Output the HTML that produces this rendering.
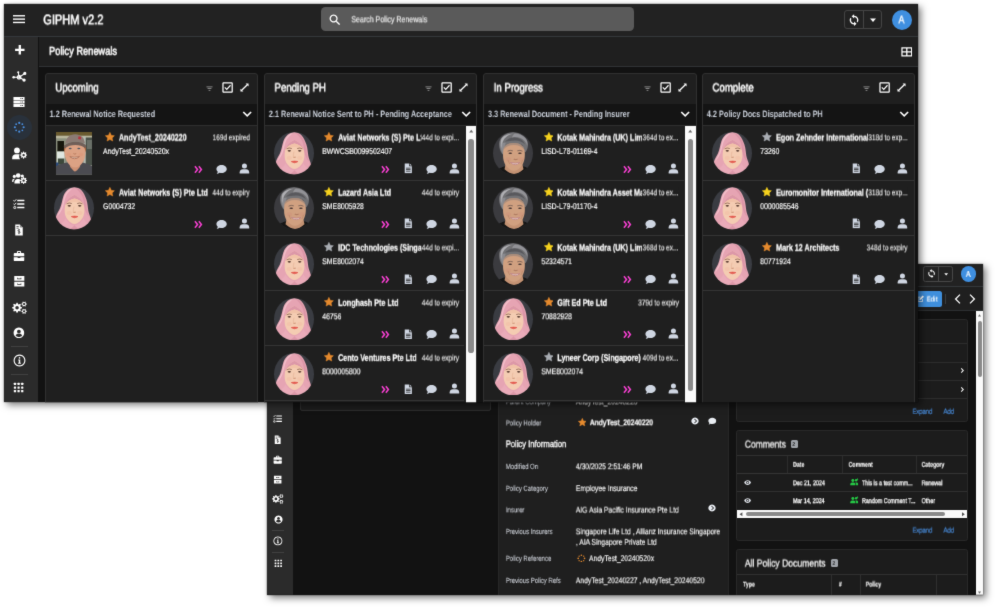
<!DOCTYPE html>
<html lang="en"><head><meta charset="utf-8"><title>GIPHM v2.2 - Policy Renewals</title>
<style>
html,body{margin:0;padding:0;background:#fff;overflow:hidden;}
html{width:995px;height:607px;}
body{width:995px;height:607px;position:relative;overflow:hidden;font-family:"Liberation Sans",Arial,sans-serif;}
#root{position:relative;width:995px;height:607px;overflow:hidden;}
.b{position:absolute;box-sizing:border-box;}
.t{position:absolute;white-space:nowrap;display:inline-block;will-change:transform;text-rendering:geometricPrecision;}
#blur{position:absolute;left:-6px;top:-6px;width:1007px;height:619px;background:#fff;filter:url(#pgsoft);}
</style></head><body>
<svg width="0" height="0" style="position:absolute"><defs><symbol id="i-plus" viewBox="0 0 16 16"><path d="M6.4 1.5h3.2v4.9h4.9v3.2h-4.9v4.9h-3.2v-4.9h-4.9v-3.2h4.9z"/></symbol><symbol id="i-network" viewBox="0 0 16 16"><path d="M1.800 9.100 L7.800 9.100 L14.200 4.900 M7.800 9.100 L13.300 12.200 M7.800 9.100 L6.900 3.600" stroke-width="1.200" fill="none" stroke="currentColor"/><circle cx="1.800" cy="9.100" r="1.400"/><path fill-rule="evenodd" d="M7.800 6.500a2.600 2.600 0 1 0 0.001 0z M7.800 8.050a1.050 1.050 0 1 1 -0.001 0z"/><circle cx="14.200" cy="4.900" r="1.850"/><circle cx="13.300" cy="12.200" r="1.850"/><circle cx="6.900" cy="3.500" r="1.150"/></symbol><symbol id="i-server" viewBox="0 0 16 16"><path fill-rule="evenodd" d="M0.600 1.400h14.800v3.900h-14.800z M12 2.800v1.100h1.100v-1.100z M10 2.800v1.100h1.100v-1.100z M0.600 6.050h14.800v3.900h-14.800z M12 7.450v1.100h1.100v-1.100z M10 7.450v1.100h1.100v-1.100z M0.600 10.700h14.800v3.900h-14.800z M12 12.100v1.100h1.100v-1.100z M10 12.100v1.100h1.100v-1.100z"/></symbol><symbol id="i-dots" viewBox="0 0 16 16"><circle cx="13.60" cy="8.00" r="1.4"/><circle cx="11.96" cy="11.96" r="1.15"/><circle cx="8.00" cy="13.60" r="1.4"/><circle cx="4.04" cy="11.96" r="1.15"/><circle cx="2.40" cy="8.00" r="1.4"/><circle cx="4.04" cy="4.04" r="1.15"/><circle cx="8.00" cy="2.40" r="1.4"/><circle cx="11.96" cy="4.04" r="1.15"/></symbol><symbol id="i-user" viewBox="0 0 16 16"><circle cx="8" cy="4.500" r="3.700"/><path d="M1 15.300v-1.800c0-2.700 2.100-4.500 4.600-4.500h4.800c2.500 0 4.600 1.800 4.600 4.500v1.800z"/></symbol><symbol id="i-usercog" viewBox="0 0 16 16"><circle cx="5.300" cy="4.700" r="3.100"/><path d="M0.200 14v-1.300c0-2.300 1.700-3.800 3.800-3.800h2.700c0.500 0 1 0.100 1.400 0.200c-0.600 1-0.700 2.200-0.300 3.300c0.200 0.600 0.500 1.100 0.900 1.600z"/><path fill-rule="evenodd" d="M16.18 9.33 L16.18 10.07 L14.98 10.48 L14.78 10.97 L15.34 12.11 L14.81 12.64 L13.67 12.08 L13.18 12.28 L12.77 13.48 L12.03 13.48 L11.62 12.28 L11.13 12.08 L9.99 12.64 L9.46 12.11 L10.02 10.97 L9.82 10.48 L8.62 10.07 L8.62 9.33 L9.82 8.92 L10.02 8.43 L9.46 7.29 L9.99 6.76 L11.13 7.32 L11.62 7.12 L12.03 5.92 L12.77 5.92 L13.18 7.12 L13.67 7.32 L14.81 6.76 L15.34 7.29 L14.78 8.43 L14.98 8.92Z M11.15 9.70 a1.25 1.25 0 1 0 2.5 0 a1.25 1.25 0 1 0 -2.5 0Z"/></symbol><symbol id="i-userscog" viewBox="0 0 16 16"><circle cx="6.600" cy="4.800" r="2.500"/><circle cx="2.500" cy="5.800" r="1.700"/><circle cx="11" cy="5.300" r="1.700"/><path d="M2.600 13.400v-1.400c0-2.100 1.600-3.500 3.400-3.500h1.300c0.600 0 1.200 0.200 1.700 0.500c-0.700 1-0.900 2.300-0.500 3.500c0.100 0.300 0.200 0.600 0.400 0.900z"/><path d="M0.200 11.800v-1.500c0-1.200 0.900-2 2-2h1c-1.100 0.800-1.700 2-1.700 3.500z"/><path fill-rule="evenodd" d="M16.18 9.83 L16.18 10.57 L14.98 10.98 L14.78 11.47 L15.34 12.61 L14.81 13.14 L13.67 12.58 L13.18 12.78 L12.77 13.98 L12.03 13.98 L11.62 12.78 L11.13 12.58 L9.99 13.14 L9.46 12.61 L10.02 11.47 L9.82 10.98 L8.62 10.57 L8.62 9.83 L9.82 9.42 L10.02 8.93 L9.46 7.79 L9.99 7.26 L11.13 7.82 L11.62 7.62 L12.03 6.42 L12.77 6.42 L13.18 7.62 L13.67 7.82 L14.81 7.26 L15.34 7.79 L14.78 8.93 L14.98 9.42Z M11.15 10.20 a1.25 1.25 0 1 0 2.5 0 a1.25 1.25 0 1 0 -2.5 0Z"/></symbol><symbol id="i-tasks" viewBox="0 0 16 16"><rect x="5.6" y="2.4" width="9.6" height="1.9" rx="0.4"/><rect x="5.6" y="7.05" width="9.6" height="1.9" rx="0.4"/><rect x="5.6" y="11.7" width="9.6" height="1.9" rx="0.4"/><path d="M0.700 3.200l1.200 1.200l2.400-2.600" fill="none" stroke-width="1.3" stroke="currentColor"/><path d="M0.700 7.900l1.200 1.200l2.400-2.600" fill="none" stroke-width="1.300" stroke="currentColor"/><rect x="1.1" y="11.400" width="2.600" height="2.600" rx="0.500" fill="none" stroke-width="1.100" stroke="currentColor"/></symbol><symbol id="i-invoice" viewBox="0 0 16 16"><path d="M3 0.800h6.200l3.800 3.800v10.600h-10z"/><path d="M9.2 0.800v3.800h3.800" fill="#2b2b2b" opacity="0.55"/><rect x="4.600" y="3" width="3" height="1" fill="#2b2b2b"/><rect x="4.600" y="5" width="3" height="1" fill="#2b2b2b"/><path d="M9.400 8.300c-0.300-0.500-0.800-0.700-1.400-0.700c-0.800 0-1.400 0.400-1.400 1.100c0 1.600 2.900 0.700 2.900 2.300c0 0.700-0.600 1.100-1.500 1.100c-0.700 0-1.300-0.300-1.600-0.800M8 6.800v6.800" fill="none" stroke="#2b2b2b" stroke-width="0.9"/></symbol><symbol id="i-briefcase" viewBox="0 0 16 16"><path fill-rule="evenodd" d="M5.200 4v-1.500c0-0.700 0.500-1.200 1.200-1.200h3.200c0.700 0 1.200 0.500 1.200 1.200v1.500h3c0.700 0 1.200 0.500 1.200 1.200v3.100h-14v-3.100c0-0.700 0.500-1.200 1.200-1.200z M6.600 4h2.800v-1.300h-2.800z"/><path d="M1 9.500h5.200v1h3.600v-1h5.200v4c0 0.700-0.500 1.200-1.200 1.200h-11.600c-0.700 0-1.200-0.500-1.200-1.200z"/></symbol><symbol id="i-cabinet" viewBox="0 0 16 16"><path fill-rule="evenodd" d="M1.600 1.400h12.800v5.900h-12.800z M5.400 3.600v1.700h5.200v-1.700h-1v0.700h-3.200v-0.700z"/><path fill-rule="evenodd" d="M1.600 8.500h12.800v6.100h-12.800z M5.400 10.800v1.700h5.200v-1.700h-1v0.700h-3.200v-0.700z"/></symbol><symbol id="i-cogs" viewBox="0 0 16 16"><path fill-rule="evenodd" d="M10.67 7.68 L10.67 8.72 L9.13 9.33 L8.84 10.04 L9.50 11.56 L8.76 12.30 L7.24 11.64 L6.53 11.93 L5.92 13.47 L4.88 13.47 L4.27 11.93 L3.56 11.64 L2.04 12.30 L1.30 11.56 L1.96 10.04 L1.67 9.33 L0.13 8.72 L0.13 7.68 L1.67 7.07 L1.96 6.36 L1.30 4.84 L2.04 4.10 L3.56 4.76 L4.27 4.47 L4.88 2.93 L5.92 2.93 L6.53 4.47 L7.24 4.76 L8.76 4.10 L9.50 4.84 L8.84 6.36 L9.13 7.07Z M3.50 8.20 a1.9 1.9 0 1 0 3.8 0 a1.9 1.9 0 1 0 -3.8 0Z"/><path fill-rule="evenodd" d="M15.78 3.92 L15.78 4.68 L14.75 5.07 L14.49 5.52 L14.67 6.60 L14.01 6.98 L13.16 6.28 L12.64 6.28 L11.79 6.98 L11.13 6.60 L11.31 5.52 L11.05 5.07 L10.02 4.68 L10.02 3.92 L11.05 3.53 L11.31 3.08 L11.13 2.00 L11.79 1.62 L12.64 2.32 L13.16 2.32 L14.01 1.62 L14.67 2.00 L14.49 3.08 L14.75 3.53Z M11.70 4.30 a1.2 1.2 0 1 0 2.4 0 a1.2 1.2 0 1 0 -2.4 0Z"/><path fill-rule="evenodd" d="M15.78 11.72 L15.78 12.48 L14.75 12.87 L14.49 13.32 L14.67 14.40 L14.01 14.78 L13.16 14.08 L12.64 14.08 L11.79 14.78 L11.13 14.40 L11.31 13.32 L11.05 12.87 L10.02 12.48 L10.02 11.72 L11.05 11.33 L11.31 10.88 L11.13 9.80 L11.79 9.42 L12.64 10.12 L13.16 10.12 L14.01 9.42 L14.67 9.80 L14.49 10.88 L14.75 11.33Z M11.70 12.10 a1.2 1.2 0 1 0 2.4 0 a1.2 1.2 0 1 0 -2.4 0Z"/></symbol><symbol id="i-usercircle" viewBox="0 0 16 16"><path fill-rule="evenodd" d="M8 0.800a7.200 7.200 0 1 0 0.001 0z M8 3.600a2.500 2.500 0 1 1 -0.001 0z M3.600 11.400c0.600-1.500 1.900-2.300 3.300-2.300h2.200c1.400 0 2.700 0.800 3.300 2.300c-1.100 1.300-2.700 2-4.400 2s-3.300-0.700-4.400-2z"/></symbol><symbol id="i-info" viewBox="0 0 16 16"><path fill-rule="evenodd" d="M8 0.700a7.300 7.300 0 1 0 0.001 0z M8 2.100a5.900 5.900 0 1 1 -0.001 0z"/><circle cx="8" cy="4.800" r="1"/><path d="M6.500 6.800h2.400v4h0.800v1.200h-3.400v-1.200h0.800v-2.800h-0.600z"/></symbol><symbol id="i-grid" viewBox="0 0 16 16"><rect x="1.2" y="1.2" width="3.200" height="3.200" rx="0.600"/><rect x="6.4" y="1.2" width="3.200" height="3.200" rx="0.600"/><rect x="11.6" y="1.2" width="3.200" height="3.200" rx="0.600"/><rect x="1.2" y="6.4" width="3.200" height="3.200" rx="0.600"/><rect x="6.4" y="6.4" width="3.200" height="3.200" rx="0.600"/><rect x="11.6" y="6.4" width="3.200" height="3.200" rx="0.600"/><rect x="1.2" y="11.6" width="3.200" height="3.200" rx="0.600"/><rect x="6.4" y="11.6" width="3.200" height="3.200" rx="0.600"/><rect x="11.6" y="11.6" width="3.200" height="3.200" rx="0.600"/></symbol><symbol id="i-menu" viewBox="0 0 16 16"><rect x="0" y="2.700" width="16" height="1.800"/><rect x="0" y="7" width="16" height="1.800"/><rect x="0" y="11.300" width="16" height="1.800"/></symbol><symbol id="i-search" viewBox="0 0 16 16"><path fill-rule="evenodd" d="M6.400 0.800a5.600 5.600 0 1 0 0.001 0z M6.400 2.600a3.800 3.800 0 1 1 -0.001 0z"/><path d="M9.400 10.700l1.300-1.300l4.700 4.700l-1.300 1.300z"/></symbol><symbol id="i-sync" viewBox="0 0 16 16"><path d="M8 2.200v-2l-3.200 2.900l3.200 2.900v-2a4 4 0 0 1 3.500 5.900l1.400 1.100a5.800 5.800 0 0 0 -4.900-8.800z"/><path d="M8 13.800v2l3.200-2.900l-3.200-2.900v2a4 4 0 0 1 -3.500-5.900l-1.400-1.100a5.800 5.800 0 0 0 4.900 8.800z"/></symbol><symbol id="i-caret" viewBox="0 0 16 16"><path d="M3.200 5.600h9.600l-4.800 5.400z"/></symbol><symbol id="i-th2" viewBox="0 0 16 16"><path fill-rule="evenodd" d="M0.500 1.600h15v12.800h-15z M2.200 3.300v3.800h4.900v-3.800z M8.900 3.300v3.800h4.900v-3.800z M2.200 8.900v3.800h4.900v-3.800z M8.900 8.900v3.800h4.900v-3.800z"/></symbol><symbol id="i-filter" viewBox="0 0 16 16"><rect x="1" y="3.500" width="14" height="1.700"/><rect x="3.600" y="7.400" width="8.800" height="1.700"/><rect x="6" y="11.300" width="4" height="1.700"/></symbol><symbol id="i-check" viewBox="0 0 16 16"><path fill-rule="evenodd" d="M2.300 0.500h11.400c1 0 1.800 0.800 1.800 1.800v11.400c0 1-0.800 1.800-1.800 1.800h-11.400c-1 0-1.800-0.800-1.800-1.800v-11.400c0-1 0.800-1.800 1.800-1.800z M2.300 2.300v11.400h11.400v-11.400z"/><path d="M3.400 8.300l1.200-1.200l2.200 2.200l4.800-5.200l1.200 1.100l-6 6.500z"/></symbol><symbol id="i-expand" viewBox="0 0 16 16"><path d="M3 13L13 3" stroke="currentColor" stroke-width="2.300" fill="none"/><path d="M15.200 0.800v5.200l-5.200-5.200z M0.800 15.200v-5.200l5.200 5.200z"/></symbol><symbol id="i-chev" viewBox="0 0 16 16"><path d="M2.200 5.900l1.500-1.500l4.300 4.300l4.300-4.300l1.500 1.500l-5.800 5.800z"/></symbol><symbol id="i-chevr" viewBox="0 0 16 16"><path d="M5.800 2.400l-1.600 1.600l4 4l-4 4l1.600 1.600l5.600-5.600z"/></symbol><symbol id="i-chevl" viewBox="0 0 16 16"><path d="M10.200 2.400l1.600 1.600l-4 4l4 4l-1.600 1.600l-5.600-5.600z"/></symbol><symbol id="i-dchev" viewBox="0 0 16 16"><path d="M0.600 3l2.200-1.800l5.300 6.800l-5.300 6.800l-2.200-1.800l3.900-5z"/><path d="M7.600 3l2.200-1.800l5.300 6.800l-5.300 6.800l-2.200-1.800l3.900-5z"/></symbol><symbol id="i-doc" viewBox="0 0 16 16"><path fill-rule="evenodd" d="M2.600 0.600h6.600v4.200h4.200v10.600h-10.800z M4.600 7.300v1h6.800v-1z M4.600 9.500v1h6.800v-1z M4.600 11.700v1h6.800v-1z"/><path d="M10.200 0.600l3.200 3.200h-3.200z"/></symbol><symbol id="i-comment" viewBox="0 0 16 16"><path d="M8 1.600c4.200 0 7.400 2.500 7.400 5.700s-3.200 5.700-7.400 5.700c-1 0-2-0.200-2.900-0.500c-0.900 0.700-2.400 1.500-4.200 1.500c0.700-0.700 1.500-1.900 1.600-3c-1.100-1-1.900-2.300-1.900-3.700c0-3.200 3.200-5.700 7.400-5.700z"/></symbol><symbol id="i-star" viewBox="0 0 16 16"><path d="M8 0.600l2.300 4.800l5.200 0.700l-3.800 3.600l1 5.200l-4.700-2.600l-4.700 2.600l1-5.200l-3.800-3.600l5.200-0.700z" stroke-linejoin="round" stroke-width="0.8" stroke="currentColor"/></symbol><symbol id="i-arrowc" viewBox="0 0 16 16"><path fill-rule="evenodd" d="M8 0.800a7.200 7.200 0 1 0 0.001 0z M6.400 4.400l1.100-1.100l4.700 4.700l-4.700 4.700l-1.100-1.100l3.600-3.600z"/></symbol><symbol id="i-eye" viewBox="0 0 16 16"><path fill-rule="evenodd" d="M8 2.800c3.400 0 6.200 2 7.600 5.200c-1.400 3.200-4.200 5.200-7.600 5.200s-6.200-2-7.600-5.200c1.400-3.200 4.200-5.200 7.600-5.200z M8 4.600a3.400 3.400 0 1 0 0.001 0z"/><circle cx="8" cy="8" r="1.900"/></symbol><symbol id="i-users" viewBox="0 0 16 16"><circle cx="5.400" cy="4.800" r="2.800"/><circle cx="11.600" cy="4.400" r="2.300"/><path d="M0.400 13.800v-1.400c0-2.100 1.600-3.600 3.500-3.600h3c1.900 0 3.500 1.500 3.500 3.600v1.400z"/><path d="M11.600 13.800v-1.600c0-1.400-0.500-2.500-1.400-3.300c0.300-0.100 0.600-0.100 0.900-0.100h1.400c1.700 0 3.100 1.300 3.100 3.100v1.900z"/><path d="M13.600 0.400h1.200v1.400h1.400v1.200h-1.400v1.400h-1.200v-1.400h-1.400v-1.200h1.400z"/></symbol><symbol id="i-edit" viewBox="0 0 16 16"><path d="M1.400 3.600h6.400l-1.600 1.600h-3.200v8h8v-3.600l1.600-1.600v6.800h-11.200z"/><path d="M12.200 1l2.800 2.800l-6.600 6.600l-3.200 0.500l0.500-3.200z"/></symbol><symbol id="i-navl" viewBox="0 0 16 16"><path d="M10.600 2.200L4.800 8l5.800 5.800" fill="none" stroke="currentColor" stroke-width="1.700"/></symbol><symbol id="i-navr" viewBox="0 0 16 16"><path d="M5.400 2.200L11.200 8l-5.800 5.800" fill="none" stroke="currentColor" stroke-width="1.700"/></symbol><symbol id="i-dots2" viewBox="0 0 16 16"><circle cx="13.80" cy="8.00" r="1.5"/><circle cx="12.10" cy="12.10" r="1.25"/><circle cx="8.00" cy="13.80" r="1.5"/><circle cx="3.90" cy="12.10" r="1.25"/><circle cx="2.20" cy="8.00" r="1.5"/><circle cx="3.90" cy="3.90" r="1.25"/><circle cx="8.00" cy="2.20" r="1.5"/><circle cx="12.10" cy="3.90" r="1.25"/></symbol><symbol id="i-tri" viewBox="0 0 16 16"><path d="M8 4l5 7h-10z"/></symbol></defs></svg><svg width="0" height="0" style="position:absolute"><defs><filter id="soft" x="-5%" y="-5%" width="110%" height="110%"><feGaussianBlur stdDeviation="0.6"/></filter><symbol id="a-hijab" viewBox="0 0 40 42"><clipPath id="cc1"><ellipse cx="20" cy="21" rx="20" ry="21"/></clipPath><g clip-path="url(#cc1)">
<rect width="40" height="42" fill="#3a3c42"/>
<g filter="url(#soft)">
<path d="M20.500 0.200c-5.200 0-9.400 3.600-11.200 9.300c-1.400 4.500-1.800 8.500-3.400 11.800c-1.300 2.700-3.200 5.300-3.900 8c-0.500 2.200-0.200 4.400 0.400 6.300l2 6.400h30l2.600-6.400c0.400-2.400-0.200-4.600-1-6.600c-0.800-2.200-1.700-4.800-2-7.700c-0.400-3.800-0.800-7.700-2.800-11.800c-2-5.700-5.500-9.300-10.700-9.300z" fill="#e6a4b3"/>
<path d="M19 1c-4.400 0.800-7.600 4.200-9 8.800c-1.300 4.400-1.700 8.400-3.300 11.700c-1.300 2.700-3 5-3.700 7.700c2.800-2.400 5.200-6.200 6.400-10.800c1.100-4.400 1.500-8.400 3.500-11.300c1.400-2.100 3.300-3.400 6.100-6.100z" fill="#f3c3cd" opacity="0.850"/>
<path d="M22 1c4 1.200 6.800 4.600 8.300 8.800c1.800 4.600 1.900 8.400 2.500 12.100c0.400 2.800 1.300 5.300 2.200 7.600c-2.600-2.900-4.200-6.600-4.700-10.700c-0.500-4.500-0.900-8.400-2.900-11.300c-1.300-2-2.900-3.700-5.400-6.500z" fill="#d58ea1" opacity="0.700"/>
<path d="M20.500 7.600c-4.600 2.200-8.600 5.800-9.400 10.400c-0.500 2.900-0.600 5.500-0.300 7.800c0.500 3.400 2.200 6.200 4.300 8.200c1.700 1.600 3.500 2.700 5.400 2.700s3.700-1.100 5.400-2.700c2.100-2 3.800-4.800 4.300-8.200c0.300-2.300 0.200-4.900-0.300-7.800c-0.800-4.600-4.800-8.200-9.400-10.400z" fill="#f4ccb2"/>
<path d="M20.500 7.600c-4.600 2.200-8.600 5.800-9.400 10.400c2-3.400 5.200-5.600 9.400-6.500c4.200 0.900 7.400 3.100 9.400 6.500c-0.800-4.600-4.800-8.200-9.400-10.400z" fill="#dc97a8"/>
<path d="M20.500 11.300c-3.800 0.900-6.800 2.700-8.800 5.500c0 0 2.500-1.700 8.800-1.900c6.300 0.200 8.800 1.900 8.800 1.900c-2-2.800-5-4.600-8.800-5.500z" fill="#f1c2a8"/>
<ellipse cx="15.300" cy="25.800" rx="2.600" ry="2" fill="#f0b49e" opacity="0.350"/>
<ellipse cx="25.900" cy="25.800" rx="2.600" ry="2" fill="#f0b49e" opacity="0.350"/>
<ellipse cx="15.300" cy="18.700" rx="1.700" ry="0.800" fill="#54382e"/>
<ellipse cx="25.700" cy="18.700" rx="1.700" ry="0.800" fill="#54382e"/>
<path d="M12.600 16.700q2.600-1.500 5.200-0.300M23.200 16.400q2.600-1.200 5.200 0.300" stroke="#8a6250" stroke-width="0.800" fill="none"/>
<path d="M19.200 24.700q1.300 1 2.600 0" stroke="#d39c80" stroke-width="1.100" fill="none"/>
<path d="M20 19.500q-0.800 3 -0.600 5" stroke="#e9b99c" stroke-width="0.900" fill="none"/>
<path d="M17.200 29.300q3.300-1 6.800 0q-3.400 2.500-6.800 0z" fill="#e2554c" stroke="#e2554c" stroke-width="0.600" stroke-linejoin="round"/>
<path d="M11.500 31c2.500 4.500 5.500 7 9 7s6.500-2.500 9-7c1 3 3.500 5 6 6.500l-2.500 4.500h-25l-2.500-4.500c2.500-1.500 5-3.500 6-6.500z" fill="#eaabb9"/>
<path d="M20.500 38c-1.500 1.500-3 3-5 4h10c-2-1-3.500-2.500-5-4z" fill="#d993a5" opacity="0.800"/>
</g></g></symbol><symbol id="a-gray" viewBox="0 0 40 42"><clipPath id="cc2"><ellipse cx="20" cy="21" rx="20" ry="21"/></clipPath><g clip-path="url(#cc2)">
<rect width="40" height="42" fill="#3b3b3f"/>
<g filter="url(#soft)">
<path d="M2 42c0.500-3.500 4-6.500 10-8l4-1.500h10l4 1.500c6 1.500 9.500 4.500 10 8z" fill="#121212"/>
<path d="M13 30l-1.500 7q5 4.500 9.500 4.500t9.500-4.500l-1.500-7z" fill="#c39273"/>
<path d="M20.500 0.300c-4-0.200-7.800 1.200-10.500 3.700c-2.400 2.200-3.800 4.500-3.900 7.500c-0.100 2.400 0.300 4.300 0.900 6.200c0.500 1.600 1.400 3 2.300 4.300l2.200 0.200l1.500-6.500l16-3l2.500 7.300l1.200-0.300c1-1.200 1.800-3 2.100-5c0.500-3.300-0.300-6.400-2.500-8.800c-2.600-2.900-7-5.400-11.800-5.600z" fill="#727275"/>
<path d="M8.500 6.500c2.500-3.200 6.500-4.800 11.500-4.800c-4.500 0.800-7.500 3-9.500 6.500c-1.300 2.300-1.700 5.300-1.200 8.300c-1.800-2.500-2.300-6.500-0.800-10z" fill="#c9c9cd" opacity="0.700"/>
<path d="M22 1.500c4 0.200 8 1.800 10.500 4.500c1.800 2 2.300 4.800 1.800 7.500c-1-3.300-3.500-6.200-7-7.500c-2.500-1-5-1.300-8-0.500c-1 0.300 1.200-3.500 2.700-4z" fill="#a9a9ad" opacity="0.600"/>
<path d="M12 9.500c3-3.300 8-5 13-3.500c3 0.900 6 3 7 6.500c-2.500-2.500-6-4-10-4s-7 1.200-10 1z" fill="#505054" opacity="0.750"/>
<path d="M6.800 13c0.500 3 1.500 6 3 8.700l1.800-5c0-2 0.300-4 1.300-6c-2.500 0-4.600 0.500-6.100 2.300z" fill="#9a9a9e" opacity="0.600"/>
<path d="M10.400 17.500c0.400-3.800 4-6.700 10.400-6.700s9.800 3 10.600 6.800c0.600 2.600 0.600 5.600 0.200 8.300c-0.500 3.400-1.900 6.600-4.200 9c-1.800 1.900-4.100 3.600-6.500 3.600s-4.800-1.600-6.600-3.500c-2.300-2.400-3.700-5.600-4.100-9c-0.300-2.800-0.200-5.800 0.200-8.500z" fill="#d0a080"/>
<path d="M10.400 17.500c0.400-3.800 4-6.700 10.400-6.700s9.800 3 10.600 6.800c-2.600-3.200-6-4.800-10.500-4.800s-8.200 1.800-10.500 4.700z" fill="#8c7d76" opacity="0.550"/>
<ellipse cx="15.300" cy="27.200" rx="2.800" ry="2.100" fill="#cf917a" opacity="0.450"/>
<ellipse cx="28" cy="27.200" rx="2.800" ry="2.100" fill="#cf917a" opacity="0.450"/>
<ellipse cx="17.300" cy="21" rx="1.800" ry="0.800" fill="#453430"/>
<ellipse cx="26.900" cy="21" rx="1.800" ry="0.800" fill="#453430"/>
<path d="M14.600 19q2.600-1.500 5.200-0.300M24.300 18.700q2.600-1.200 5.200 0.300" stroke="#6a564e" stroke-width="0.750" fill="none"/>
<path d="M20.800 26.800q1.900 1.300 3.800 0" stroke="#b07c62" stroke-width="1.200" fill="none"/>
<path d="M17.400 30.200q4.900 1.400 9.600 0q-4.800 4.400-9.600 0z" fill="#efe6e2" stroke="#c08484" stroke-width="0.900" stroke-linejoin="round"/>
<path d="M15 27.500q0.800 2.700 1.800 4.300M29.600 27.500q-0.800 2.700-1.800 4.300" stroke="#b98568" stroke-width="0.700" fill="none"/>
</g></g></symbol><symbol id="a-man" viewBox="0 0 36.5 42.8"><clipPath id="cc3"><rect width="36.5" height="42.800"/></clipPath><g clip-path="url(#cc3)">
<rect width="36.500" height="42.800" fill="#8d9184"/>
<g filter="url(#soft)">
<rect x="0" y="0" width="36.500" height="3.800" fill="#6a5a2e"/>
<rect x="0" y="3.800" width="36.500" height="2.800" fill="#b9b69c"/>
<rect x="0" y="6.500" width="10" height="27" fill="#8c917f"/>
<rect x="1.400" y="9" width="6.600" height="10.200" fill="#17170e"/>
<rect x="1" y="19.600" width="7.600" height="11.500" fill="#dfe6e0"/>
<rect x="1.800" y="26.500" width="6.500" height="6" fill="#3c4a3a"/>
<rect x="0" y="30.500" width="2.500" height="3.500" fill="#2a4a7a"/>
<rect x="27.500" y="4.500" width="2.300" height="28" fill="#b4bab2"/>
<rect x="29.800" y="5.500" width="6.700" height="27.500" fill="#4a5149"/>
<rect x="31" y="8" width="5.500" height="9" fill="#6a7068"/>
<path d="M0 42.800v-8.500c2.500-1.800 6.500-3 11-3.800h15c4.500 0.800 8 2 10.500 4v8.300z" fill="#4b4b51"/>
<path d="M13 30l1.200 5q3.400 4.200 4.800 4.600q1.800-0.500 4.800-4.600l1.200-5z" fill="#cf9274"/>
<path d="M8.600 17c-0.600 3 0 6.500 1 9.500c1.200 3.500 3.400 6.500 6 8c1.200 0.700 2.400 1 3.500 1s2.400-0.400 3.600-1.100c2.600-1.600 4.700-4.500 5.800-8c0.900-3 1.400-6.400 0.800-9.400c-0.800-4-5-6-10.300-6s-9.600 2-10.400 6z" fill="#dca284"/>
<path d="M8.300 13.500c-0.500 2.200-0.300 4.800 0.300 7c0.300-2.800 1-5 2.400-6.500z M29.800 13.500c0.500 2.200 0.300 4.800-0.300 7c-0.300-2.800-1-5-2.400-6.500z" fill="#a8643c"/>
<path d="M9.200 12c0.200-5.600 4.300-9.800 10-9.800c5.500 0 9.300 3.600 9.800 9.200c-2.800-1.300-6-2-9.800-2c-4 0-7.200 0.900-10 2.600z" fill="#8b7a73"/>
<path d="M8 13.800c3.200-2.700 7-4 11.400-4c4.200 0 7.800 1 10.400 3.300c0.300 1.100 0 2.300-0.600 3.100c-2.600-2.100-6-3.100-9.800-3.100c-4.200 0-7.800 1.200-10.800 3.400c-0.700-0.800-0.900-1.800-0.600-2.700z" fill="#6f5f59"/>
<path d="M22.600 4.200l2.600 0.800l-0.500 2.600l-2.600-0.700z" fill="#b5303c"/>
<ellipse cx="14.200" cy="16.600" rx="1.500" ry="0.750" fill="#4a5560"/>
<ellipse cx="22.800" cy="16.600" rx="1.500" ry="0.750" fill="#4a5560"/>
<ellipse cx="12.600" cy="22.500" rx="2.300" ry="1.800" fill="#dc9272" opacity="0.400"/>
<ellipse cx="24.800" cy="22.500" rx="2.300" ry="1.800" fill="#dc9272" opacity="0.400"/>
<path d="M17.400 21.600q1.400 1 2.800 0" stroke="#b87a5c" stroke-width="1" fill="none"/>
<path d="M13.800 24.600q4.800 1.400 9.600 0q-4.800 4.200-9.600 0z" fill="#efe6d8" stroke="#a86a52" stroke-width="0.800" stroke-linejoin="round"/>
</g></g></symbol></defs></svg>
<svg width="0" height="0" style="position:absolute"><defs><filter id="pgsoft" x="0" y="0" width="100%" height="100%" color-interpolation-filters="sRGB"><feConvolveMatrix order="3" kernelMatrix="0.015 0.075 0.015 0.075 0.64 0.075 0.015 0.075 0.015" divisor="1" edgeMode="duplicate" preserveAlpha="true"/></filter></defs></svg>
<div id="root"><div id="blur"><div class="b" style="left:6px;top:6px;width:995px;height:607px;">
<div class="b" id="back" style="left:266.5px;top:263.6px;width:716.50px;height:331.20px;background:#121212;box-shadow:3px 3px 7px 0 rgba(0,0,0,.5), 0 0 1.500px rgba(0,0,0,.6);"></div><div class="b" style="left:0;top:0;width:995px;height:607px;clip-path:inset(263.6px 12.00px 12.20px 266.5px);"><div class="b" style="left:266.50px;top:263.60px;width:716.50px;height:22.60px;background:#222222;"></div><div class="b" style="left:266.50px;top:286.00px;width:716.50px;height:1.00px;background:#34383b;"></div><div class="b" style="left:292.80px;top:287.00px;width:690.20px;height:23.30px;background:#1f1f1f;"></div><div class="b" style="left:292.80px;top:310.00px;width:690.20px;height:1.00px;background:#2c2f31;"></div><div class="b" style="left:266.50px;top:287.00px;width:26.30px;height:307.80px;background:#2b2b2b;"></div><svg class="b" style="left:273.30px;top:413.70px;color:#fff;" width="9.4" height="9.4" viewBox="0 0 16 16" fill="currentColor"><use href="#i-tasks"/></svg><svg class="b" style="left:273.30px;top:434.70px;color:#fff;" width="9.4" height="9.4" viewBox="0 0 16 16" fill="currentColor"><use href="#i-invoice"/></svg><svg class="b" style="left:273.30px;top:454.60px;color:#fff;" width="9.4" height="9.4" viewBox="0 0 16 16" fill="currentColor"><use href="#i-briefcase"/></svg><svg class="b" style="left:273.30px;top:474.60px;color:#fff;" width="9.4" height="9.4" viewBox="0 0 16 16" fill="currentColor"><use href="#i-cabinet"/></svg><svg class="b" style="left:272.20px;top:493.40px;color:#fff;" width="11.6" height="11.6" viewBox="0 0 16 16" fill="currentColor"><use href="#i-cogs"/></svg><svg class="b" style="left:273.50px;top:514.60px;color:#fff;" width="9" height="9" viewBox="0 0 16 16" fill="currentColor"><use href="#i-usercircle"/></svg><svg class="b" style="left:273.10px;top:536.30px;color:#fff;" width="9.8" height="9.8" viewBox="0 0 16 16" fill="currentColor"><use href="#i-info"/></svg><svg class="b" style="left:273.70px;top:558.50px;color:#fff;" width="8.6" height="8.6" viewBox="0 0 16 16" fill="currentColor"><use href="#i-grid"/></svg><div class="b" style="left:271.80px;top:530.00px;width:12.60px;height:1.00px;background:#414141;"></div><div class="b" style="left:271.80px;top:551.80px;width:12.60px;height:1.00px;background:#414141;"></div><div class="b" style="left:923.30px;top:266.30px;width:29.50px;height:15.40px;background:transparent;border:1px solid #484848;border-radius:2.5px;"></div><div class="b" style="left:938.20px;top:266.30px;width:1.00px;height:15.40px;background:#484848;"></div><svg class="b" style="left:926.50px;top:269.20px;color:#fff;" width="9.2" height="9.2" viewBox="0 0 16 16" fill="currentColor"><use href="#i-sync"/></svg><svg class="b" style="left:942.70px;top:270.60px;color:#fff;" width="6.4" height="6.4" viewBox="0 0 16 16" fill="currentColor"><use href="#i-caret"/></svg><div class="b" style="left:960.80px;top:266.20px;width:15.60px;height:15.60px;background:#3f8fe0;border-radius:50%;"></div><span class="t" style="top:269px;font-size:8.6px;line-height:11px;color:#fff;font-weight:400;-webkit-text-stroke:0.2px #fff;left:965px;transform:translate(0.80px,0.00px) scaleX(0.85);transform-origin:0 50%;">A</span><div class="b" style="left:880.00px;top:291.00px;width:61.90px;height:15.90px;background:#3f8fdc;border-radius:2.5px;"></div><svg class="b" style="left:916.70px;top:294.90px;color:#fff;" width="7.4" height="7.4" viewBox="0 0 16 16" fill="currentColor"><use href="#i-edit"/></svg><span class="t" style="top:294px;font-size:7.5px;line-height:10px;color:#fff;font-weight:700;left:926px;transform:translate(0.80px,0.56px) scaleX(0.76);transform-origin:0 50%;">Edit</span><div class="b" style="left:945.20px;top:294.20px;width:1.00px;height:9.80px;background:#3a3d40;"></div><svg class="b" style="left:952.30px;top:293.00px;color:#fff;" width="12" height="12" viewBox="0 0 16 16" fill="currentColor"><use href="#i-navl"/></svg><svg class="b" style="left:966.30px;top:293.00px;color:#fff;" width="12" height="12" viewBox="0 0 16 16" fill="currentColor"><use href="#i-navr"/></svg><div class="b" style="left:300.30px;top:320.00px;width:190.70px;height:90.80px;background:#1c1c1c;border:1px solid #2c2c2c;border-radius:0 0 2px 2px;"></div><div class="b" style="left:498.20px;top:318.00px;width:230.50px;height:300.00px;background:#1f1f1f;border:1px solid #272727;"></div><span class="t" style="top:397px;font-size:7.6px;line-height:10px;color:#cdd1d8;font-weight:400;-webkit-text-stroke:0.1px #cdd1d8;left:505px;transform:translate(0.80px,0.26px) scaleX(0.79);transform-origin:0 50%;">Parent Company</span><span class="t" style="top:396px;font-size:8.3px;line-height:11px;color:#fff;font-weight:400;-webkit-text-stroke:0.15px #fff;left:575px;transform:translate(0.80px,0.49px) scaleX(0.815);transform-origin:0 50%;">AndyTest_20240220</span><span class="t" style="top:418px;font-size:7.6px;line-height:10px;color:#cdd1d8;font-weight:400;-webkit-text-stroke:0.1px #cdd1d8;left:505px;transform:translate(0.80px,0.46px) scaleX(0.79);transform-origin:0 50%;">Policy Holder</span><svg class="b" style="left:577.50px;top:418.30px;color:#e58a2e;" width="8.6" height="8.6" viewBox="0 0 16 16" fill="currentColor"><use href="#i-star"/></svg><span class="t" style="top:417px;font-size:8.4px;line-height:11px;color:#fff;font-weight:700;-webkit-text-stroke:0.2px #fff;left:589px;transform:translate(0.80px,0.29px) scaleX(0.795);transform-origin:0 50%;">AndyTest_20240220</span><svg class="b" style="left:691.20px;top:416.60px;color:#e8ecf2;" width="8" height="8" viewBox="0 0 16 16" fill="currentColor"><use href="#i-arrowc"/></svg><svg class="b" style="left:708.30px;top:416.50px;color:#e8ecf2;" width="8.6" height="8.6" viewBox="0 0 16 16" fill="currentColor"><use href="#i-comment"/></svg><span class="t" style="top:439px;font-size:9.5px;line-height:12px;color:#fff;font-weight:400;-webkit-text-stroke:0.35px #fff;left:505px;transform:translate(0.80px,0.08px) scaleX(0.8);transform-origin:0 50%;">Policy Information</span><span class="t" style="top:461px;font-size:7.6px;line-height:10px;color:#cdd1d8;font-weight:400;-webkit-text-stroke:0.1px #cdd1d8;left:505px;transform:translate(0.80px,0.96px) scaleX(0.79);transform-origin:0 50%;">Modified On</span><span class="t" style="top:461px;font-size:8.3px;line-height:11px;color:#fff;font-weight:400;-webkit-text-stroke:0.15px #fff;left:575px;transform:translate(0.80px,0.19px) scaleX(0.815);transform-origin:0 50%;">4/30/2025 2:51:46 PM</span><span class="t" style="top:483px;font-size:7.6px;line-height:10px;color:#cdd1d8;font-weight:400;-webkit-text-stroke:0.1px #cdd1d8;left:505px;transform:translate(0.80px,0.86px) scaleX(0.79);transform-origin:0 50%;">Policy Category</span><span class="t" style="top:483px;font-size:8.3px;line-height:11px;color:#fff;font-weight:400;-webkit-text-stroke:0.15px #fff;left:575px;transform:translate(0.80px,0.09px) scaleX(0.815);transform-origin:0 50%;">Employee Insurance</span><span class="t" style="top:505px;font-size:7.6px;line-height:10px;color:#cdd1d8;font-weight:400;-webkit-text-stroke:0.1px #cdd1d8;left:505px;transform:translate(0.80px,0.36px) scaleX(0.79);transform-origin:0 50%;">Insurer</span><span class="t" style="top:504px;font-size:8.3px;line-height:11px;color:#fff;font-weight:400;-webkit-text-stroke:0.15px #fff;left:575px;transform:translate(0.80px,0.59px) scaleX(0.815);transform-origin:0 50%;">AIG Asia Pacific Insurance Pte Ltd</span><svg class="b" style="left:708.40px;top:503.60px;color:#e8ecf2;" width="8" height="8" viewBox="0 0 16 16" fill="currentColor"><use href="#i-arrowc"/></svg><span class="t" style="top:527px;font-size:7.6px;line-height:10px;color:#cdd1d8;font-weight:400;-webkit-text-stroke:0.1px #cdd1d8;left:505px;transform:translate(0.80px,0.06px) scaleX(0.79);transform-origin:0 50%;">Previous Insurers</span><span class="t" style="top:526px;font-size:8.3px;line-height:11px;color:#fff;font-weight:400;-webkit-text-stroke:0.15px #fff;left:575px;transform:translate(0.80px,0.29px) scaleX(0.815);transform-origin:0 50%;">Singapore Life Ltd , Allianz Insurance Singapore</span><span class="t" style="top:536px;font-size:8.3px;line-height:11px;color:#fff;font-weight:400;-webkit-text-stroke:0.15px #fff;left:575px;transform:translate(0.80px,0.79px) scaleX(0.815);transform-origin:0 50%;">, AIA Singapore Private Ltd</span><span class="t" style="top:553px;font-size:7.6px;line-height:10px;color:#cdd1d8;font-weight:400;-webkit-text-stroke:0.1px #cdd1d8;left:505px;transform:translate(0.80px,0.86px) scaleX(0.79);transform-origin:0 50%;">Policy Reference</span><svg class="b" style="left:577.00px;top:553.60px;color:#e58a2e;" width="8.8" height="8.8" viewBox="0 0 16 16" fill="currentColor"><use href="#i-dots2"/></svg><span class="t" style="top:553px;font-size:8.3px;line-height:11px;color:#fff;font-weight:400;-webkit-text-stroke:0.15px #fff;left:589px;transform:translate(0.00px,0.09px) scaleX(0.815);transform-origin:0 50%;">AndyTest_20240520x</span><span class="t" style="top:575px;font-size:7.6px;line-height:10px;color:#cdd1d8;font-weight:400;-webkit-text-stroke:0.1px #cdd1d8;left:505px;transform:translate(0.80px,0.96px) scaleX(0.79);transform-origin:0 50%;">Previous Policy Refs</span><span class="t" style="top:575px;font-size:8.3px;line-height:11px;color:#fff;font-weight:400;-webkit-text-stroke:0.15px #fff;left:575px;transform:translate(0.80px,0.19px) scaleX(0.815);transform-origin:0 50%;">AndyTest_20240227 , AndyTest_20240520</span><div class="b" style="left:736.40px;top:319.00px;width:231.60px;height:102.80px;background:#1c1c1c;border:1px solid #292929;border-radius:2.5px;"></div><div class="b" style="left:737.40px;top:343.30px;width:229.60px;height:1.00px;background:#2c2c2c;"></div><div class="b" style="left:737.40px;top:361.80px;width:229.60px;height:1.00px;background:#2c2c2c;"></div><div class="b" style="left:737.40px;top:379.80px;width:229.60px;height:1.00px;background:#2c2c2c;"></div><div class="b" style="left:737.40px;top:398.30px;width:229.60px;height:1.00px;background:#2c2c2c;"></div><svg class="b" style="left:958.70px;top:367.10px;color:#fff;" width="7" height="7" viewBox="0 0 16 16" fill="currentColor"><use href="#i-chevr"/></svg><svg class="b" style="left:958.70px;top:385.50px;color:#fff;" width="7" height="7" viewBox="0 0 16 16" fill="currentColor"><use href="#i-chevr"/></svg><span class="t" style="top:406px;font-size:7.6px;line-height:10px;color:#4a90e2;font-weight:400;-webkit-text-stroke:0.2px #4a90e2;left:912px;transform:translate(0.60px,0.86px) scaleX(0.76);transform-origin:0 50%;">Expand</span><span class="t" style="top:406px;font-size:7.6px;line-height:10px;color:#4a90e2;font-weight:400;-webkit-text-stroke:0.2px #4a90e2;left:943px;transform:translate(0.50px,0.86px) scaleX(0.78);transform-origin:0 50%;">Add</span><div class="b" style="left:736.40px;top:430.00px;width:231.60px;height:111.20px;background:#1c1c1c;border:1px solid #292929;border-radius:2.5px;"></div><span class="t" style="top:438px;font-size:10.3px;line-height:13px;color:#fff;font-weight:400;-webkit-text-stroke:0.25px #fff;left:744px;transform:translate(0.80px,0.60px) scaleX(0.825);transform-origin:0 50%;">Comments</span><div class="b" style="left:790.80px;top:440.00px;width:6.80px;height:8.00px;background:#9ea2a8;border-radius:1.500px;"></div><span class="t" style="top:440px;font-size:5.6px;line-height:8px;color:#1c1c1c;font-weight:700;left:792px;transform:translate(0.50px,0.99px) scaleX(0.8);transform-origin:0 50%;">2</span><div class="b" style="left:737.40px;top:455.00px;width:229.60px;height:1.00px;background:#303030;"></div><div class="b" style="left:737.40px;top:472.90px;width:229.60px;height:1.00px;background:#343434;"></div><div class="b" style="left:737.40px;top:491.40px;width:229.60px;height:1.00px;background:#303030;"></div><div class="b" style="left:786.90px;top:455.50px;width:1.00px;height:17.80px;background:#2d2d2d;"></div><div class="b" style="left:842.10px;top:455.50px;width:1.00px;height:17.80px;background:#2d2d2d;"></div><div class="b" style="left:915.50px;top:455.50px;width:1.00px;height:17.80px;background:#2d2d2d;"></div><span class="t" style="top:459px;font-size:7.1px;line-height:10px;color:#fff;font-weight:700;-webkit-text-stroke:0.15px #fff;left:793px;transform:translate(0.00px,0.79px) scaleX(0.74);transform-origin:0 50%;">Date</span><span class="t" style="top:459px;font-size:7.1px;line-height:10px;color:#fff;font-weight:700;-webkit-text-stroke:0.15px #fff;left:848px;transform:translate(0.60px,0.79px) scaleX(0.74);transform-origin:0 50%;">Comment</span><span class="t" style="top:459px;font-size:7.1px;line-height:10px;color:#fff;font-weight:700;-webkit-text-stroke:0.15px #fff;left:921px;transform:translate(0.60px,0.79px) scaleX(0.74);transform-origin:0 50%;">Category</span><svg class="b" style="left:743.70px;top:479.30px;color:#dfe3ea;" width="7.2" height="7.2" viewBox="0 0 16 16" fill="currentColor"><use href="#i-eye"/></svg><span class="t" style="top:478px;font-size:7.1px;line-height:10px;color:#fff;font-weight:400;-webkit-text-stroke:0.3px #fff;left:793px;transform:translate(0.00px,0.29px) scaleX(0.755);transform-origin:0 50%;">Dec 21, 2024</span><svg class="b" style="left:850.20px;top:478.40px;color:#25c945;" width="8.4" height="8.4" viewBox="0 0 16 16" fill="currentColor"><use href="#i-users"/></svg><span class="t" style="top:478px;font-size:7.1px;line-height:10px;color:#fff;font-weight:400;-webkit-text-stroke:0.3px #fff;left:862px;transform:translate(0.00px,0.29px) scaleX(0.755);transform-origin:0 50%;">This is a test comm...</span><span class="t" style="top:478px;font-size:7.1px;line-height:10px;color:#fff;font-weight:400;-webkit-text-stroke:0.3px #fff;left:921px;transform:translate(0.60px,0.29px) scaleX(0.755);transform-origin:0 50%;">Renewal</span><svg class="b" style="left:743.70px;top:497.10px;color:#dfe3ea;" width="7.2" height="7.2" viewBox="0 0 16 16" fill="currentColor"><use href="#i-eye"/></svg><span class="t" style="top:496px;font-size:7.1px;line-height:10px;color:#fff;font-weight:400;-webkit-text-stroke:0.3px #fff;left:793px;transform:translate(0.00px,0.09px) scaleX(0.755);transform-origin:0 50%;">Mar 14, 2024</span><svg class="b" style="left:850.20px;top:496.20px;color:#25c945;" width="8.4" height="8.4" viewBox="0 0 16 16" fill="currentColor"><use href="#i-users"/></svg><span class="t" style="top:496px;font-size:7.1px;line-height:10px;color:#fff;font-weight:400;-webkit-text-stroke:0.3px #fff;left:862px;transform:translate(0.00px,0.09px) scaleX(0.755);transform-origin:0 50%;">Random Comment T...</span><span class="t" style="top:496px;font-size:7.1px;line-height:10px;color:#fff;font-weight:400;-webkit-text-stroke:0.3px #fff;left:921px;transform:translate(0.60px,0.09px) scaleX(0.755);transform-origin:0 50%;">Other</span><div class="b" style="left:737.40px;top:510.00px;width:229.60px;height:8.20px;background:#fafafa;"></div><div class="b" style="left:746.20px;top:511.90px;width:199.20px;height:4.40px;background:#8a8a8a;border-radius:2.2px;"></div><svg class="b" style="left:737.80px;top:510.90px;color:#505050;transform:rotate(-90deg);" width="6.4" height="6.4" viewBox="0 0 16 16" fill="currentColor"><use href="#i-tri"/></svg><svg class="b" style="left:959.80px;top:510.90px;color:#505050;transform:rotate(90deg);" width="6.4" height="6.4" viewBox="0 0 16 16" fill="currentColor"><use href="#i-tri"/></svg><span class="t" style="top:525px;font-size:7.6px;line-height:10px;color:#4a90e2;font-weight:400;-webkit-text-stroke:0.2px #4a90e2;left:912px;transform:translate(0.60px,0.66px) scaleX(0.76);transform-origin:0 50%;">Expand</span><span class="t" style="top:525px;font-size:7.6px;line-height:10px;color:#4a90e2;font-weight:400;-webkit-text-stroke:0.2px #4a90e2;left:943px;transform:translate(0.50px,0.66px) scaleX(0.78);transform-origin:0 50%;">Add</span><div class="b" style="left:736.40px;top:549.40px;width:231.60px;height:90.60px;background:#1c1c1c;border:1px solid #292929;border-radius:2.5px;"></div><span class="t" style="top:557px;font-size:10.3px;line-height:13px;color:#fff;font-weight:400;-webkit-text-stroke:0.25px #fff;left:744px;transform:translate(0.80px,0.60px) scaleX(0.835);transform-origin:0 50%;">All Policy Documents</span><div class="b" style="left:831.00px;top:559.00px;width:6.80px;height:8.00px;background:#9ea2a8;border-radius:1.500px;"></div><span class="t" style="top:559px;font-size:5.6px;line-height:8px;color:#1c1c1c;font-weight:700;left:832px;transform:translate(0.70px,0.99px) scaleX(0.8);transform-origin:0 50%;">2</span><div class="b" style="left:737.40px;top:574.20px;width:229.60px;height:1.00px;background:#303030;"></div><div class="b" style="left:830.50px;top:574.70px;width:1.00px;height:22.00px;background:#2f2f2f;"></div><div class="b" style="left:859.50px;top:574.70px;width:1.00px;height:22.00px;background:#2f2f2f;"></div><div class="b" style="left:936.10px;top:574.70px;width:1.00px;height:22.00px;background:#2f2f2f;"></div><span class="t" style="top:579px;font-size:7.1px;line-height:10px;color:#fff;font-weight:700;-webkit-text-stroke:0.15px #fff;left:743px;transform:translate(0.00px,0.59px) scaleX(0.74);transform-origin:0 50%;">Type</span><span class="t" style="top:579px;font-size:7.1px;line-height:10px;color:#fff;font-weight:700;-webkit-text-stroke:0.15px #fff;left:838px;transform:translate(0.80px,0.59px) scaleX(0.74);transform-origin:0 50%;">#</span><span class="t" style="top:579px;font-size:7.1px;line-height:10px;color:#fff;font-weight:700;-webkit-text-stroke:0.15px #fff;left:865px;transform:translate(0.70px,0.59px) scaleX(0.74);transform-origin:0 50%;">Policy</span><div class="b" style="left:975.90px;top:310.50px;width:7.20px;height:290.00px;background:#fafafa;"></div><svg class="b" style="left:977.00px;top:313.10px;color:#6a6a6a;" width="5" height="5" viewBox="0 0 16 16" fill="currentColor"><use href="#i-tri"/></svg><div class="b" style="left:977.70px;top:321.20px;width:4.00px;height:56.20px;background:#8a8a8a;border-radius:2px;"></div><svg class="b" style="left:977.00px;top:590.10px;color:#6a6a6a;transform:rotate(180deg);" width="5" height="5" viewBox="0 0 16 16" fill="currentColor"><use href="#i-tri"/></svg></div><div class="b" id="front" style="left:4.1px;top:4.0px;width:913.70px;height:398.20px;background:#121212;box-shadow:3px 3px 7px 0 rgba(0,0,0,.5), 0 0 1.500px rgba(0,0,0,.6);"></div><div class="b" style="left:0;top:0;width:995px;height:607px;clip-path:inset(4.0px 77.20px 204.80px 4.1px);"><div class="b" style="left:4.10px;top:4.00px;width:913.70px;height:32.30px;background:#222222;"></div><div class="b" style="left:4.10px;top:36.00px;width:913.70px;height:1.00px;background:#34383b;"></div><div class="b" style="left:4.10px;top:37.00px;width:34.40px;height:365.20px;background:#2b2b2b;"></div><div class="b" style="left:38.60px;top:37.00px;width:879.20px;height:29.50px;background:#1f1f1f;"></div><div class="b" style="left:38.60px;top:66.20px;width:879.20px;height:1.00px;background:#303335;"></div><svg class="b" style="left:13.00px;top:13.10px;color:#fff;" width="12.4" height="12.4" viewBox="0 0 16 16" fill="currentColor"><use href="#i-menu"/></svg><span class="t" style="top:12px;font-size:13.8px;line-height:16px;color:#fff;font-weight:400;-webkit-text-stroke:0.6px #fff;left:43px;transform:translate(0.30px,0.28px) scaleX(0.8);transform-origin:0 50%;">GIPHM v2.2</span><div class="b" style="left:320.60px;top:7.30px;width:313.00px;height:23.80px;background:#5a5a5a;border-radius:4.5px;"></div><svg class="b" style="left:328.85px;top:13.65px;color:#fff;" width="11.5" height="11.5" viewBox="0 0 16 16" fill="currentColor"><use href="#i-search"/></svg><span class="t" style="top:14px;font-size:8.8px;line-height:11px;color:#ececec;font-weight:400;-webkit-text-stroke:0.2px #ececec;left:351px;transform:translate(0.40px,0.30px) scaleX(0.8);transform-origin:0 50%;">Search Policy Renewals</span><div class="b" style="left:844.20px;top:9.90px;width:37.80px;height:19.60px;background:transparent;border:1px solid #444;border-radius:3px;"></div><div class="b" style="left:863.30px;top:9.90px;width:1.00px;height:19.60px;background:#444;"></div><svg class="b" style="left:848.10px;top:13.50px;color:#fff;" width="12.2" height="12.2" viewBox="0 0 16 16" fill="currentColor"><use href="#i-sync"/></svg><svg class="b" style="left:867.60px;top:14.80px;color:#fff;" width="10" height="10" viewBox="0 0 16 16" fill="currentColor"><use href="#i-caret"/></svg><div class="b" style="left:891.90px;top:9.60px;width:20.00px;height:20.00px;background:#3f8fe0;border-radius:50%;"></div><span class="t" style="top:14px;font-size:11px;line-height:13px;color:#fff;font-weight:400;-webkit-text-stroke:0.35px #fff;left:898px;transform:translate(0.50px,0.28px) scaleX(0.82);transform-origin:0 50%;">A</span><span class="t" style="top:44px;font-size:11.6px;line-height:14px;color:#fff;font-weight:400;-webkit-text-stroke:0.55px #fff;left:49px;transform:translate(0.00px,0.80px) scaleX(0.8);transform-origin:0 50%;">Policy Renewals</span><svg class="b" style="left:900.90px;top:45.80px;color:#fff;" width="11.6" height="11.6" viewBox="0 0 16 16" fill="currentColor"><use href="#i-th2"/></svg><svg class="b" style="left:13.50px;top:44.20px;color:#fff;" width="11.6" height="11.6" viewBox="0 0 16 16" fill="currentColor"><use href="#i-plus"/></svg><svg class="b" style="left:12.05px;top:69.15px;color:#fff;" width="14.5" height="14.5" viewBox="0 0 16 16" fill="currentColor"><use href="#i-network"/></svg><svg class="b" style="left:13.30px;top:96.00px;color:#fff;" width="12" height="12" viewBox="0 0 16 16" fill="currentColor"><use href="#i-server"/></svg><div class="b" style="left:6.80px;top:114.80px;width:25.20px;height:25.20px;background:#29313b;border-radius:50%;"></div><svg class="b" style="left:13.15px;top:121.15px;color:#4a90e2;" width="12.5" height="12.5" viewBox="0 0 16 16" fill="currentColor"><use href="#i-dots"/></svg><svg class="b" style="left:11.80px;top:145.80px;color:#fff;" width="15" height="15" viewBox="0 0 16 16" fill="currentColor"><use href="#i-usercog"/></svg><svg class="b" style="left:11.80px;top:171.10px;color:#fff;" width="15" height="15" viewBox="0 0 16 16" fill="currentColor"><use href="#i-userscog"/></svg><svg class="b" style="left:13.30px;top:198.00px;color:#fff;" width="12" height="12" viewBox="0 0 16 16" fill="currentColor"><use href="#i-tasks"/></svg><svg class="b" style="left:13.30px;top:223.80px;color:#fff;" width="12" height="12" viewBox="0 0 16 16" fill="currentColor"><use href="#i-invoice"/></svg><svg class="b" style="left:13.30px;top:249.80px;color:#fff;" width="12" height="12" viewBox="0 0 16 16" fill="currentColor"><use href="#i-briefcase"/></svg><svg class="b" style="left:13.00px;top:275.40px;color:#fff;" width="12.6" height="12.6" viewBox="0 0 16 16" fill="currentColor"><use href="#i-cabinet"/></svg><svg class="b" style="left:11.80px;top:299.70px;color:#fff;" width="15" height="15" viewBox="0 0 16 16" fill="currentColor"><use href="#i-cogs"/></svg><svg class="b" style="left:13.40px;top:326.70px;color:#fff;" width="11.8" height="11.8" viewBox="0 0 16 16" fill="currentColor"><use href="#i-usercircle"/></svg><svg class="b" style="left:12.80px;top:353.50px;color:#fff;" width="13" height="13" viewBox="0 0 16 16" fill="currentColor"><use href="#i-info"/></svg><svg class="b" style="left:13.40px;top:382.30px;color:#fff;" width="11.2" height="11.2" viewBox="0 0 16 16" fill="currentColor"><use href="#i-grid"/></svg><div class="b" style="left:11.40px;top:346.00px;width:16.50px;height:1.00px;background:#414141;"></div><div class="b" style="left:11.40px;top:374.00px;width:16.50px;height:1.00px;background:#414141;"></div><div class="b" style="left:45.00px;top:73.20px;width:213.30px;height:340.00px;background:#1f1f1f;border:1px solid #303030;border-radius:3px 3px 0 0;"></div><span class="t" style="top:80px;font-size:11.9px;line-height:14px;color:#fff;font-weight:400;-webkit-text-stroke:0.55px #fff;left:55px;transform:translate(0.30px,0.46px) scaleX(0.81);transform-origin:0 50%;">Upcoming</span><svg class="b" style="left:205.50px;top:84.70px;color:#a8a8a8;" width="7.0" height="7.0" viewBox="0 0 16 16" fill="currentColor"><use href="#i-filter"/></svg><svg class="b" style="left:221.60px;top:81.90px;color:#fff;" width="11.2" height="11.2" viewBox="0 0 16 16" fill="currentColor"><use href="#i-check"/></svg><svg class="b" style="left:239.70px;top:82.70px;color:#fff;" width="9.0" height="9.0" viewBox="0 0 16 16" fill="currentColor"><use href="#i-expand"/></svg><div class="b" style="left:46.00px;top:103.70px;width:211.30px;height:21.30px;background:#141414;"></div><span class="t" style="top:108px;font-size:9.3px;line-height:12px;color:#cdd3dd;font-weight:700;left:49px;transform:translate(0.60px,0.06px) scaleX(0.785);transform-origin:0 50%;">1.2 Renewal Notice Requested</span><svg class="b" style="left:240.60px;top:107.50px;color:#fff;" width="12.4" height="12.4" viewBox="0 0 16 16" fill="currentColor"><use href="#i-chev"/></svg><div class="b" style="left:46.00px;top:124.60px;width:211.30px;height:1.00px;background:#2e2e2e;"></div><div class="b" style="left:46.00px;top:179.90px;width:211.30px;height:1.00px;background:#353535;"></div><svg class="b" style="left:55.60px;top:132.10px" width="36.5" height="42.8" viewBox="0 0 36.5 42.8" preserveAspectRatio="none"><use href="#a-man"/></svg><svg class="b" style="left:105.10px;top:132.20px;color:#e58a2e;" width="9.8" height="9.8" viewBox="0 0 16 16" fill="currentColor"><use href="#i-star"/></svg><div class="b" style="left:118px;top:129px;width:132.10px;height:18px;overflow:hidden;"><span class="t" style="left:0;top:3px;font-size:9.5px;line-height:12px;color:#fff;font-weight:700;-webkit-text-stroke:0.25px #fff;transform:translate(0.90px,0.58px) scaleX(0.752);transform-origin:0 50%;">AndyTest_20240220</span></div><span class="t" style="top:132px;font-size:8.4px;line-height:11px;color:#f0f0f0;font-weight:400;-webkit-text-stroke:0.15px #f0f0f0;right:744px;transform:translate(-0.90px,0.29px) scaleX(0.775);transform-origin:100% 50%;background:#1f1f1f;padding-left:0.600px;">169d expired</span><span class="t" style="top:145px;font-size:8.4px;line-height:11px;color:#fff;font-weight:400;-webkit-text-stroke:0.2px #fff;left:103px;transform:translate(0.00px,0.99px) scaleX(0.82);transform-origin:0 50%;">AndyTest_20240520x</span><svg class="b" style="left:239.45px;top:163.15px;color:#cfd6e2;" width="10.9" height="10.9" viewBox="0 0 16 16" fill="currentColor"><use href="#i-user"/></svg><svg class="b" style="left:216.30px;top:163.50px;color:#cfd6e2;" width="11.2" height="11.2" viewBox="0 0 16 16" fill="currentColor"><use href="#i-comment"/></svg><svg class="b" style="left:194.45px;top:164.55px;color:#f53fd0;" width="8.9" height="8.9" viewBox="0 0 16 16" fill="currentColor"><use href="#i-dchev"/></svg><div class="b" style="left:46.00px;top:234.97px;width:211.30px;height:1.00px;background:#353535;"></div><svg class="b" style="left:54.40px;top:187.47px" width="40" height="42.400" viewBox="0 0 40 42" preserveAspectRatio="none"><use href="#a-hijab"/></svg><svg class="b" style="left:105.10px;top:187.27px;color:#e58a2e;" width="9.8" height="9.8" viewBox="0 0 16 16" fill="currentColor"><use href="#i-star"/></svg><div class="b" style="left:118px;top:184px;width:132.10px;height:18px;overflow:hidden;"><span class="t" style="left:0;top:3px;font-size:9.5px;line-height:12px;color:#fff;font-weight:700;-webkit-text-stroke:0.25px #fff;transform:translate(0.90px,0.65px) scaleX(0.752);transform-origin:0 50%;">Aviat Networks (S) Pte Ltd</span></div><span class="t" style="top:187px;font-size:8.4px;line-height:11px;color:#f0f0f0;font-weight:400;-webkit-text-stroke:0.15px #f0f0f0;right:744px;transform:translate(-0.90px,0.36px) scaleX(0.775);transform-origin:100% 50%;background:#1f1f1f;padding-left:0.600px;">44d to expiry</span><span class="t" style="top:201px;font-size:8.4px;line-height:11px;color:#fff;font-weight:400;-webkit-text-stroke:0.2px #fff;left:103px;transform:translate(0.00px,0.06px) scaleX(0.82);transform-origin:0 50%;">G0004732</span><svg class="b" style="left:239.45px;top:218.22px;color:#cfd6e2;" width="10.9" height="10.9" viewBox="0 0 16 16" fill="currentColor"><use href="#i-user"/></svg><svg class="b" style="left:216.30px;top:218.57px;color:#cfd6e2;" width="11.2" height="11.2" viewBox="0 0 16 16" fill="currentColor"><use href="#i-comment"/></svg><svg class="b" style="left:194.45px;top:219.62px;color:#f53fd0;" width="8.9" height="8.9" viewBox="0 0 16 16" fill="currentColor"><use href="#i-dchev"/></svg><div class="b" style="left:264.20px;top:73.20px;width:213.30px;height:340.00px;background:#1f1f1f;border:1px solid #303030;border-radius:3px 3px 0 0;"></div><span class="t" style="top:80px;font-size:11.9px;line-height:14px;color:#fff;font-weight:400;-webkit-text-stroke:0.55px #fff;left:274px;transform:translate(0.50px,0.46px) scaleX(0.81);transform-origin:0 50%;">Pending PH</span><svg class="b" style="left:424.70px;top:84.70px;color:#a8a8a8;" width="7.0" height="7.0" viewBox="0 0 16 16" fill="currentColor"><use href="#i-filter"/></svg><svg class="b" style="left:440.80px;top:81.90px;color:#fff;" width="11.2" height="11.2" viewBox="0 0 16 16" fill="currentColor"><use href="#i-check"/></svg><svg class="b" style="left:458.90px;top:82.70px;color:#fff;" width="9.0" height="9.0" viewBox="0 0 16 16" fill="currentColor"><use href="#i-expand"/></svg><div class="b" style="left:265.20px;top:103.70px;width:211.30px;height:21.30px;background:#141414;"></div><span class="t" style="top:108px;font-size:9.3px;line-height:12px;color:#cdd3dd;font-weight:700;left:268px;transform:translate(0.80px,0.06px) scaleX(0.785);transform-origin:0 50%;">2.1 Renewal Notice Sent to PH - Pending Acceptance</span><svg class="b" style="left:459.80px;top:107.50px;color:#fff;" width="12.4" height="12.4" viewBox="0 0 16 16" fill="currentColor"><use href="#i-chev"/></svg><div class="b" style="left:265.20px;top:124.60px;width:211.30px;height:1.00px;background:#2e2e2e;"></div><div class="b" style="left:265.20px;top:179.90px;width:199.30px;height:1.00px;background:#353535;"></div><svg class="b" style="left:273.60px;top:132.40px" width="40" height="42.400" viewBox="0 0 40 42" preserveAspectRatio="none"><use href="#a-hijab"/></svg><svg class="b" style="left:324.30px;top:132.20px;color:#e58a2e;" width="9.8" height="9.8" viewBox="0 0 16 16" fill="currentColor"><use href="#i-star"/></svg><div class="b" style="left:338px;top:129px;width:121.50px;height:18px;overflow:hidden;"><span class="t" style="left:0;top:3px;font-size:9.5px;line-height:12px;color:#fff;font-weight:700;-webkit-text-stroke:0.25px #fff;transform:translate(0.10px,0.58px) scaleX(0.752);transform-origin:0 50%;">Aviat Networks (S) Pte Ltd</span></div><span class="t" style="top:132px;font-size:8.4px;line-height:11px;color:#f0f0f0;font-weight:400;-webkit-text-stroke:0.15px #f0f0f0;right:535px;transform:translate(-0.50px,0.29px) scaleX(0.775);transform-origin:100% 50%;background:#1f1f1f;padding-left:0.600px;">44d to expi...</span><span class="t" style="top:145px;font-size:8.4px;line-height:11px;color:#fff;font-weight:400;-webkit-text-stroke:0.2px #fff;left:322px;transform:translate(0.20px,0.99px) scaleX(0.82);transform-origin:0 50%;">BWWCSB0099502407</span><svg class="b" style="left:449.05px;top:163.15px;color:#cfd6e2;" width="10.9" height="10.9" viewBox="0 0 16 16" fill="currentColor"><use href="#i-user"/></svg><svg class="b" style="left:425.90px;top:163.50px;color:#cfd6e2;" width="11.2" height="11.2" viewBox="0 0 16 16" fill="currentColor"><use href="#i-comment"/></svg><svg class="b" style="left:403.00px;top:163.40px;color:#cfd6e2;" width="10.6" height="10.6" viewBox="0 0 16 16" fill="currentColor"><use href="#i-doc"/></svg><svg class="b" style="left:380.65px;top:164.55px;color:#f53fd0;" width="8.9" height="8.9" viewBox="0 0 16 16" fill="currentColor"><use href="#i-dchev"/></svg><div class="b" style="left:265.20px;top:234.97px;width:199.30px;height:1.00px;background:#353535;"></div><svg class="b" style="left:273.60px;top:187.47px" width="40" height="42.400" viewBox="0 0 40 42" preserveAspectRatio="none"><use href="#a-gray"/></svg><svg class="b" style="left:324.30px;top:187.27px;color:#f6d21e;" width="9.8" height="9.8" viewBox="0 0 16 16" fill="currentColor"><use href="#i-star"/></svg><div class="b" style="left:338px;top:184px;width:121.50px;height:18px;overflow:hidden;"><span class="t" style="left:0;top:3px;font-size:9.5px;line-height:12px;color:#fff;font-weight:700;-webkit-text-stroke:0.25px #fff;transform:translate(0.10px,0.65px) scaleX(0.752);transform-origin:0 50%;">Lazard Asia Ltd</span></div><span class="t" style="top:187px;font-size:8.4px;line-height:11px;color:#f0f0f0;font-weight:400;-webkit-text-stroke:0.15px #f0f0f0;right:535px;transform:translate(-0.50px,0.36px) scaleX(0.775);transform-origin:100% 50%;background:#1f1f1f;padding-left:0.600px;">44d to expiry</span><span class="t" style="top:201px;font-size:8.4px;line-height:11px;color:#fff;font-weight:400;-webkit-text-stroke:0.2px #fff;left:322px;transform:translate(0.20px,0.06px) scaleX(0.82);transform-origin:0 50%;">SME8005928</span><svg class="b" style="left:449.05px;top:218.22px;color:#cfd6e2;" width="10.9" height="10.9" viewBox="0 0 16 16" fill="currentColor"><use href="#i-user"/></svg><svg class="b" style="left:425.90px;top:218.57px;color:#cfd6e2;" width="11.2" height="11.2" viewBox="0 0 16 16" fill="currentColor"><use href="#i-comment"/></svg><svg class="b" style="left:403.00px;top:218.47px;color:#cfd6e2;" width="10.6" height="10.6" viewBox="0 0 16 16" fill="currentColor"><use href="#i-doc"/></svg><svg class="b" style="left:380.65px;top:219.62px;color:#f53fd0;" width="8.9" height="8.9" viewBox="0 0 16 16" fill="currentColor"><use href="#i-dchev"/></svg><div class="b" style="left:265.20px;top:290.04px;width:199.30px;height:1.00px;background:#353535;"></div><svg class="b" style="left:273.60px;top:242.54px" width="40" height="42.400" viewBox="0 0 40 42" preserveAspectRatio="none"><use href="#a-hijab"/></svg><svg class="b" style="left:324.30px;top:242.34px;color:#a9adb3;" width="9.8" height="9.8" viewBox="0 0 16 16" fill="currentColor"><use href="#i-star"/></svg><div class="b" style="left:338px;top:239px;width:121.50px;height:18px;overflow:hidden;"><span class="t" style="left:0;top:3px;font-size:9.5px;line-height:12px;color:#fff;font-weight:700;-webkit-text-stroke:0.25px #fff;transform:translate(0.10px,0.72px) scaleX(0.752);transform-origin:0 50%;">IDC Technologies (Singapore)</span></div><span class="t" style="top:242px;font-size:8.4px;line-height:11px;color:#f0f0f0;font-weight:400;-webkit-text-stroke:0.15px #f0f0f0;right:535px;transform:translate(-0.50px,0.43px) scaleX(0.775);transform-origin:100% 50%;background:#1f1f1f;padding-left:0.600px;">44d to expi...</span><span class="t" style="top:256px;font-size:8.4px;line-height:11px;color:#fff;font-weight:400;-webkit-text-stroke:0.2px #fff;left:322px;transform:translate(0.20px,0.13px) scaleX(0.82);transform-origin:0 50%;">SME8002074</span><svg class="b" style="left:449.05px;top:273.29px;color:#cfd6e2;" width="10.9" height="10.9" viewBox="0 0 16 16" fill="currentColor"><use href="#i-user"/></svg><svg class="b" style="left:425.90px;top:273.64px;color:#cfd6e2;" width="11.2" height="11.2" viewBox="0 0 16 16" fill="currentColor"><use href="#i-comment"/></svg><svg class="b" style="left:403.00px;top:273.54px;color:#cfd6e2;" width="10.6" height="10.6" viewBox="0 0 16 16" fill="currentColor"><use href="#i-doc"/></svg><svg class="b" style="left:380.65px;top:274.69px;color:#f53fd0;" width="8.9" height="8.9" viewBox="0 0 16 16" fill="currentColor"><use href="#i-dchev"/></svg><div class="b" style="left:265.20px;top:345.11px;width:199.30px;height:1.00px;background:#353535;"></div><svg class="b" style="left:273.60px;top:297.61px" width="40" height="42.400" viewBox="0 0 40 42" preserveAspectRatio="none"><use href="#a-hijab"/></svg><svg class="b" style="left:324.30px;top:297.41px;color:#e58a2e;" width="9.8" height="9.8" viewBox="0 0 16 16" fill="currentColor"><use href="#i-star"/></svg><div class="b" style="left:338px;top:294px;width:121.50px;height:18px;overflow:hidden;"><span class="t" style="left:0;top:3px;font-size:9.5px;line-height:12px;color:#fff;font-weight:700;-webkit-text-stroke:0.25px #fff;transform:translate(0.10px,0.79px) scaleX(0.752);transform-origin:0 50%;">Longhash Pte Ltd</span></div><span class="t" style="top:297px;font-size:8.4px;line-height:11px;color:#f0f0f0;font-weight:400;-webkit-text-stroke:0.15px #f0f0f0;right:535px;transform:translate(-0.50px,0.50px) scaleX(0.775);transform-origin:100% 50%;background:#1f1f1f;padding-left:0.600px;">44d to expiry</span><span class="t" style="top:311px;font-size:8.4px;line-height:11px;color:#fff;font-weight:400;-webkit-text-stroke:0.2px #fff;left:322px;transform:translate(0.20px,0.20px) scaleX(0.82);transform-origin:0 50%;">46756</span><svg class="b" style="left:449.05px;top:328.36px;color:#cfd6e2;" width="10.9" height="10.9" viewBox="0 0 16 16" fill="currentColor"><use href="#i-user"/></svg><svg class="b" style="left:425.90px;top:328.71px;color:#cfd6e2;" width="11.2" height="11.2" viewBox="0 0 16 16" fill="currentColor"><use href="#i-comment"/></svg><svg class="b" style="left:403.00px;top:328.61px;color:#cfd6e2;" width="10.6" height="10.6" viewBox="0 0 16 16" fill="currentColor"><use href="#i-doc"/></svg><svg class="b" style="left:380.65px;top:329.76px;color:#f53fd0;" width="8.9" height="8.9" viewBox="0 0 16 16" fill="currentColor"><use href="#i-dchev"/></svg><div class="b" style="left:265.20px;top:400.18px;width:199.30px;height:1.00px;background:#353535;"></div><svg class="b" style="left:273.60px;top:352.68px" width="40" height="42.400" viewBox="0 0 40 42" preserveAspectRatio="none"><use href="#a-hijab"/></svg><svg class="b" style="left:324.30px;top:352.48px;color:#e58a2e;" width="9.8" height="9.8" viewBox="0 0 16 16" fill="currentColor"><use href="#i-star"/></svg><div class="b" style="left:338px;top:349px;width:121.50px;height:18px;overflow:hidden;"><span class="t" style="left:0;top:3px;font-size:9.5px;line-height:12px;color:#fff;font-weight:700;-webkit-text-stroke:0.25px #fff;transform:translate(0.10px,0.86px) scaleX(0.752);transform-origin:0 50%;">Cento Ventures Pte Ltd</span></div><span class="t" style="top:352px;font-size:8.4px;line-height:11px;color:#f0f0f0;font-weight:400;-webkit-text-stroke:0.15px #f0f0f0;right:535px;transform:translate(-0.50px,0.57px) scaleX(0.775);transform-origin:100% 50%;background:#1f1f1f;padding-left:0.600px;">44d to expiry</span><span class="t" style="top:366px;font-size:8.4px;line-height:11px;color:#fff;font-weight:400;-webkit-text-stroke:0.2px #fff;left:322px;transform:translate(0.20px,0.27px) scaleX(0.82);transform-origin:0 50%;">8000005800</span><svg class="b" style="left:449.05px;top:383.43px;color:#cfd6e2;" width="10.9" height="10.9" viewBox="0 0 16 16" fill="currentColor"><use href="#i-user"/></svg><svg class="b" style="left:425.90px;top:383.78px;color:#cfd6e2;" width="11.2" height="11.2" viewBox="0 0 16 16" fill="currentColor"><use href="#i-comment"/></svg><svg class="b" style="left:403.00px;top:383.68px;color:#cfd6e2;" width="10.6" height="10.6" viewBox="0 0 16 16" fill="currentColor"><use href="#i-doc"/></svg><svg class="b" style="left:380.65px;top:384.83px;color:#f53fd0;" width="8.9" height="8.9" viewBox="0 0 16 16" fill="currentColor"><use href="#i-dchev"/></svg><div class="b" style="left:465.90px;top:125.80px;width:10.60px;height:300.00px;background:#fafafa;"></div><svg class="b" style="left:467.85px;top:128.35px;color:#6a6a6a;" width="6.5" height="6.5" viewBox="0 0 16 16" fill="currentColor"><use href="#i-tri"/></svg><div class="b" style="left:468.40px;top:138.60px;width:5.60px;height:214.40px;background:#8a8a8a;border-radius:2.8px;"></div><div class="b" style="left:483.40px;top:73.20px;width:213.30px;height:340.00px;background:#1f1f1f;border:1px solid #303030;border-radius:3px 3px 0 0;"></div><span class="t" style="top:80px;font-size:11.9px;line-height:14px;color:#fff;font-weight:400;-webkit-text-stroke:0.55px #fff;left:493px;transform:translate(0.70px,0.46px) scaleX(0.81);transform-origin:0 50%;">In Progress</span><svg class="b" style="left:643.90px;top:84.70px;color:#a8a8a8;" width="7.0" height="7.0" viewBox="0 0 16 16" fill="currentColor"><use href="#i-filter"/></svg><svg class="b" style="left:660.00px;top:81.90px;color:#fff;" width="11.2" height="11.2" viewBox="0 0 16 16" fill="currentColor"><use href="#i-check"/></svg><svg class="b" style="left:678.10px;top:82.70px;color:#fff;" width="9.0" height="9.0" viewBox="0 0 16 16" fill="currentColor"><use href="#i-expand"/></svg><div class="b" style="left:484.40px;top:103.70px;width:211.30px;height:21.30px;background:#141414;"></div><span class="t" style="top:108px;font-size:9.3px;line-height:12px;color:#cdd3dd;font-weight:700;left:488px;transform:translate(0.00px,0.06px) scaleX(0.785);transform-origin:0 50%;">3.3 Renewal Document - Pending Insurer</span><svg class="b" style="left:679.00px;top:107.50px;color:#fff;" width="12.4" height="12.4" viewBox="0 0 16 16" fill="currentColor"><use href="#i-chev"/></svg><div class="b" style="left:484.40px;top:124.60px;width:211.30px;height:1.00px;background:#2e2e2e;"></div><div class="b" style="left:484.40px;top:179.90px;width:199.30px;height:1.00px;background:#353535;"></div><svg class="b" style="left:492.80px;top:132.40px" width="40" height="42.400" viewBox="0 0 40 42" preserveAspectRatio="none"><use href="#a-gray"/></svg><svg class="b" style="left:543.50px;top:132.20px;color:#f6d21e;" width="9.8" height="9.8" viewBox="0 0 16 16" fill="currentColor"><use href="#i-star"/></svg><div class="b" style="left:557px;top:129px;width:121.70px;height:18px;overflow:hidden;"><span class="t" style="left:0;top:3px;font-size:9.5px;line-height:12px;color:#fff;font-weight:700;-webkit-text-stroke:0.25px #fff;transform:translate(0.30px,0.58px) scaleX(0.752);transform-origin:0 50%;">Kotak Mahindra (UK) Limited</span></div><span class="t" style="top:132px;font-size:8.4px;line-height:11px;color:#f0f0f0;font-weight:400;-webkit-text-stroke:0.15px #f0f0f0;right:316px;transform:translate(-0.30px,0.29px) scaleX(0.775);transform-origin:100% 50%;background:#1f1f1f;padding-left:0.600px;">364d to ex...</span><span class="t" style="top:145px;font-size:8.4px;line-height:11px;color:#fff;font-weight:400;-webkit-text-stroke:0.2px #fff;left:541px;transform:translate(0.40px,0.99px) scaleX(0.82);transform-origin:0 50%;">LISD-L78-01169-4</span><svg class="b" style="left:668.25px;top:163.15px;color:#cfd6e2;" width="10.9" height="10.9" viewBox="0 0 16 16" fill="currentColor"><use href="#i-user"/></svg><svg class="b" style="left:645.10px;top:163.50px;color:#cfd6e2;" width="11.2" height="11.2" viewBox="0 0 16 16" fill="currentColor"><use href="#i-comment"/></svg><svg class="b" style="left:623.25px;top:164.55px;color:#f53fd0;" width="8.9" height="8.9" viewBox="0 0 16 16" fill="currentColor"><use href="#i-dchev"/></svg><div class="b" style="left:484.40px;top:234.97px;width:199.30px;height:1.00px;background:#353535;"></div><svg class="b" style="left:492.80px;top:187.47px" width="40" height="42.400" viewBox="0 0 40 42" preserveAspectRatio="none"><use href="#a-gray"/></svg><svg class="b" style="left:543.50px;top:187.27px;color:#f6d21e;" width="9.8" height="9.8" viewBox="0 0 16 16" fill="currentColor"><use href="#i-star"/></svg><div class="b" style="left:557px;top:184px;width:121.70px;height:18px;overflow:hidden;"><span class="t" style="left:0;top:3px;font-size:9.5px;line-height:12px;color:#fff;font-weight:700;-webkit-text-stroke:0.25px #fff;transform:translate(0.30px,0.65px) scaleX(0.752);transform-origin:0 50%;">Kotak Mahindra Asset Management</span></div><span class="t" style="top:187px;font-size:8.4px;line-height:11px;color:#f0f0f0;font-weight:400;-webkit-text-stroke:0.15px #f0f0f0;right:316px;transform:translate(-0.30px,0.36px) scaleX(0.775);transform-origin:100% 50%;background:#1f1f1f;padding-left:0.600px;">364d to ex...</span><span class="t" style="top:201px;font-size:8.4px;line-height:11px;color:#fff;font-weight:400;-webkit-text-stroke:0.2px #fff;left:541px;transform:translate(0.40px,0.06px) scaleX(0.82);transform-origin:0 50%;">LISD-L79-01170-4</span><svg class="b" style="left:668.25px;top:218.22px;color:#cfd6e2;" width="10.9" height="10.9" viewBox="0 0 16 16" fill="currentColor"><use href="#i-user"/></svg><svg class="b" style="left:645.10px;top:218.57px;color:#cfd6e2;" width="11.2" height="11.2" viewBox="0 0 16 16" fill="currentColor"><use href="#i-comment"/></svg><svg class="b" style="left:623.25px;top:219.62px;color:#f53fd0;" width="8.9" height="8.9" viewBox="0 0 16 16" fill="currentColor"><use href="#i-dchev"/></svg><div class="b" style="left:484.40px;top:290.04px;width:199.30px;height:1.00px;background:#353535;"></div><svg class="b" style="left:492.80px;top:242.54px" width="40" height="42.400" viewBox="0 0 40 42" preserveAspectRatio="none"><use href="#a-gray"/></svg><svg class="b" style="left:543.50px;top:242.34px;color:#f6d21e;" width="9.8" height="9.8" viewBox="0 0 16 16" fill="currentColor"><use href="#i-star"/></svg><div class="b" style="left:557px;top:239px;width:121.70px;height:18px;overflow:hidden;"><span class="t" style="left:0;top:3px;font-size:9.5px;line-height:12px;color:#fff;font-weight:700;-webkit-text-stroke:0.25px #fff;transform:translate(0.30px,0.72px) scaleX(0.752);transform-origin:0 50%;">Kotak Mahindra (UK) Limited</span></div><span class="t" style="top:242px;font-size:8.4px;line-height:11px;color:#f0f0f0;font-weight:400;-webkit-text-stroke:0.15px #f0f0f0;right:316px;transform:translate(-0.30px,0.43px) scaleX(0.775);transform-origin:100% 50%;background:#1f1f1f;padding-left:0.600px;">368d to ex...</span><span class="t" style="top:256px;font-size:8.4px;line-height:11px;color:#fff;font-weight:400;-webkit-text-stroke:0.2px #fff;left:541px;transform:translate(0.40px,0.13px) scaleX(0.82);transform-origin:0 50%;">52324571</span><svg class="b" style="left:668.25px;top:273.29px;color:#cfd6e2;" width="10.9" height="10.9" viewBox="0 0 16 16" fill="currentColor"><use href="#i-user"/></svg><svg class="b" style="left:645.10px;top:273.64px;color:#cfd6e2;" width="11.2" height="11.2" viewBox="0 0 16 16" fill="currentColor"><use href="#i-comment"/></svg><svg class="b" style="left:623.25px;top:274.69px;color:#f53fd0;" width="8.9" height="8.9" viewBox="0 0 16 16" fill="currentColor"><use href="#i-dchev"/></svg><div class="b" style="left:484.40px;top:345.11px;width:199.30px;height:1.00px;background:#353535;"></div><svg class="b" style="left:492.80px;top:297.61px" width="40" height="42.400" viewBox="0 0 40 42" preserveAspectRatio="none"><use href="#a-hijab"/></svg><svg class="b" style="left:543.50px;top:297.41px;color:#e58a2e;" width="9.8" height="9.8" viewBox="0 0 16 16" fill="currentColor"><use href="#i-star"/></svg><div class="b" style="left:557px;top:294px;width:121.70px;height:18px;overflow:hidden;"><span class="t" style="left:0;top:3px;font-size:9.5px;line-height:12px;color:#fff;font-weight:700;-webkit-text-stroke:0.25px #fff;transform:translate(0.30px,0.79px) scaleX(0.752);transform-origin:0 50%;">Gift Ed Pte Ltd</span></div><span class="t" style="top:297px;font-size:8.4px;line-height:11px;color:#f0f0f0;font-weight:400;-webkit-text-stroke:0.15px #f0f0f0;right:316px;transform:translate(-0.30px,0.50px) scaleX(0.775);transform-origin:100% 50%;background:#1f1f1f;padding-left:0.600px;">379d to expiry</span><span class="t" style="top:311px;font-size:8.4px;line-height:11px;color:#fff;font-weight:400;-webkit-text-stroke:0.2px #fff;left:541px;transform:translate(0.40px,0.20px) scaleX(0.82);transform-origin:0 50%;">70882928</span><svg class="b" style="left:668.25px;top:328.36px;color:#cfd6e2;" width="10.9" height="10.9" viewBox="0 0 16 16" fill="currentColor"><use href="#i-user"/></svg><svg class="b" style="left:645.10px;top:328.71px;color:#cfd6e2;" width="11.2" height="11.2" viewBox="0 0 16 16" fill="currentColor"><use href="#i-comment"/></svg><svg class="b" style="left:623.25px;top:329.76px;color:#f53fd0;" width="8.9" height="8.9" viewBox="0 0 16 16" fill="currentColor"><use href="#i-dchev"/></svg><div class="b" style="left:484.40px;top:400.18px;width:199.30px;height:1.00px;background:#353535;"></div><svg class="b" style="left:492.80px;top:352.68px" width="40" height="42.400" viewBox="0 0 40 42" preserveAspectRatio="none"><use href="#a-hijab"/></svg><svg class="b" style="left:543.50px;top:352.48px;color:#a9adb3;" width="9.8" height="9.8" viewBox="0 0 16 16" fill="currentColor"><use href="#i-star"/></svg><div class="b" style="left:557px;top:349px;width:121.70px;height:18px;overflow:hidden;"><span class="t" style="left:0;top:3px;font-size:9.5px;line-height:12px;color:#fff;font-weight:700;-webkit-text-stroke:0.25px #fff;transform:translate(0.30px,0.86px) scaleX(0.752);transform-origin:0 50%;">Lyneer Corp (Singapore)</span></div><span class="t" style="top:352px;font-size:8.4px;line-height:11px;color:#f0f0f0;font-weight:400;-webkit-text-stroke:0.15px #f0f0f0;right:316px;transform:translate(-0.30px,0.57px) scaleX(0.775);transform-origin:100% 50%;background:#1f1f1f;padding-left:0.600px;">409d to ex...</span><span class="t" style="top:366px;font-size:8.4px;line-height:11px;color:#fff;font-weight:400;-webkit-text-stroke:0.2px #fff;left:541px;transform:translate(0.40px,0.27px) scaleX(0.82);transform-origin:0 50%;">SME8002074</span><svg class="b" style="left:668.25px;top:383.43px;color:#cfd6e2;" width="10.9" height="10.9" viewBox="0 0 16 16" fill="currentColor"><use href="#i-user"/></svg><svg class="b" style="left:645.10px;top:383.78px;color:#cfd6e2;" width="11.2" height="11.2" viewBox="0 0 16 16" fill="currentColor"><use href="#i-comment"/></svg><svg class="b" style="left:623.25px;top:384.83px;color:#f53fd0;" width="8.9" height="8.9" viewBox="0 0 16 16" fill="currentColor"><use href="#i-dchev"/></svg><div class="b" style="left:685.10px;top:125.80px;width:10.60px;height:300.00px;background:#fafafa;"></div><svg class="b" style="left:687.05px;top:128.35px;color:#6a6a6a;" width="6.5" height="6.5" viewBox="0 0 16 16" fill="currentColor"><use href="#i-tri"/></svg><div class="b" style="left:687.60px;top:138.60px;width:5.60px;height:252.40px;background:#8a8a8a;border-radius:2.8px;"></div><div class="b" style="left:702.20px;top:73.20px;width:213.30px;height:340.00px;background:#1f1f1f;border:1px solid #303030;border-radius:3px 3px 0 0;"></div><span class="t" style="top:80px;font-size:11.9px;line-height:14px;color:#fff;font-weight:400;-webkit-text-stroke:0.55px #fff;left:712px;transform:translate(0.50px,0.46px) scaleX(0.81);transform-origin:0 50%;">Complete</span><svg class="b" style="left:862.70px;top:84.70px;color:#a8a8a8;" width="7.0" height="7.0" viewBox="0 0 16 16" fill="currentColor"><use href="#i-filter"/></svg><svg class="b" style="left:878.80px;top:81.90px;color:#fff;" width="11.2" height="11.2" viewBox="0 0 16 16" fill="currentColor"><use href="#i-check"/></svg><svg class="b" style="left:896.90px;top:82.70px;color:#fff;" width="9.0" height="9.0" viewBox="0 0 16 16" fill="currentColor"><use href="#i-expand"/></svg><div class="b" style="left:703.20px;top:103.70px;width:211.30px;height:21.30px;background:#141414;"></div><span class="t" style="top:108px;font-size:9.3px;line-height:12px;color:#cdd3dd;font-weight:700;left:706px;transform:translate(0.80px,0.06px) scaleX(0.785);transform-origin:0 50%;">4.2 Policy Docs Dispatched to PH</span><svg class="b" style="left:897.80px;top:107.50px;color:#fff;" width="12.4" height="12.4" viewBox="0 0 16 16" fill="currentColor"><use href="#i-chev"/></svg><div class="b" style="left:703.20px;top:124.60px;width:211.30px;height:1.00px;background:#2e2e2e;"></div><div class="b" style="left:703.20px;top:179.90px;width:211.30px;height:1.00px;background:#353535;"></div><svg class="b" style="left:711.60px;top:132.40px" width="40" height="42.400" viewBox="0 0 40 42" preserveAspectRatio="none"><use href="#a-hijab"/></svg><svg class="b" style="left:762.30px;top:132.20px;color:#a9adb3;" width="9.8" height="9.8" viewBox="0 0 16 16" fill="currentColor"><use href="#i-star"/></svg><div class="b" style="left:776px;top:129px;width:131.30px;height:18px;overflow:hidden;"><span class="t" style="left:0;top:3px;font-size:9.5px;line-height:12px;color:#fff;font-weight:700;-webkit-text-stroke:0.25px #fff;transform:translate(0.10px,0.58px) scaleX(0.752);transform-origin:0 50%;">Egon Zehnder International</span></div><span class="t" style="top:132px;font-size:8.4px;line-height:11px;color:#f0f0f0;font-weight:400;-webkit-text-stroke:0.15px #f0f0f0;right:87px;transform:translate(-0.70px,0.29px) scaleX(0.775);transform-origin:100% 50%;background:#1f1f1f;padding-left:0.600px;">318d to exp...</span><span class="t" style="top:145px;font-size:8.4px;line-height:11px;color:#fff;font-weight:400;-webkit-text-stroke:0.2px #fff;left:760px;transform:translate(0.20px,0.99px) scaleX(0.82);transform-origin:0 50%;">73260</span><svg class="b" style="left:896.65px;top:163.15px;color:#cfd6e2;" width="10.9" height="10.9" viewBox="0 0 16 16" fill="currentColor"><use href="#i-user"/></svg><svg class="b" style="left:873.50px;top:163.50px;color:#cfd6e2;" width="11.2" height="11.2" viewBox="0 0 16 16" fill="currentColor"><use href="#i-comment"/></svg><svg class="b" style="left:850.60px;top:163.40px;color:#cfd6e2;" width="10.6" height="10.6" viewBox="0 0 16 16" fill="currentColor"><use href="#i-doc"/></svg><div class="b" style="left:703.20px;top:234.97px;width:211.30px;height:1.00px;background:#353535;"></div><svg class="b" style="left:711.60px;top:187.47px" width="40" height="42.400" viewBox="0 0 40 42" preserveAspectRatio="none"><use href="#a-hijab"/></svg><svg class="b" style="left:762.30px;top:187.27px;color:#f6d21e;" width="9.8" height="9.8" viewBox="0 0 16 16" fill="currentColor"><use href="#i-star"/></svg><div class="b" style="left:776px;top:184px;width:131.30px;height:18px;overflow:hidden;"><span class="t" style="left:0;top:3px;font-size:9.5px;line-height:12px;color:#fff;font-weight:700;-webkit-text-stroke:0.25px #fff;transform:translate(0.10px,0.65px) scaleX(0.752);transform-origin:0 50%;">Euromonitor International (Singapore)</span></div><span class="t" style="top:187px;font-size:8.4px;line-height:11px;color:#f0f0f0;font-weight:400;-webkit-text-stroke:0.15px #f0f0f0;right:87px;transform:translate(-0.70px,0.36px) scaleX(0.775);transform-origin:100% 50%;background:#1f1f1f;padding-left:0.600px;">318d to exp...</span><span class="t" style="top:201px;font-size:8.4px;line-height:11px;color:#fff;font-weight:400;-webkit-text-stroke:0.2px #fff;left:760px;transform:translate(0.20px,0.06px) scaleX(0.82);transform-origin:0 50%;">0000085546</span><svg class="b" style="left:896.65px;top:218.22px;color:#cfd6e2;" width="10.9" height="10.9" viewBox="0 0 16 16" fill="currentColor"><use href="#i-user"/></svg><svg class="b" style="left:873.50px;top:218.57px;color:#cfd6e2;" width="11.2" height="11.2" viewBox="0 0 16 16" fill="currentColor"><use href="#i-comment"/></svg><svg class="b" style="left:850.60px;top:218.47px;color:#cfd6e2;" width="10.6" height="10.6" viewBox="0 0 16 16" fill="currentColor"><use href="#i-doc"/></svg><div class="b" style="left:703.20px;top:290.04px;width:211.30px;height:1.00px;background:#353535;"></div><svg class="b" style="left:711.60px;top:242.54px" width="40" height="42.400" viewBox="0 0 40 42" preserveAspectRatio="none"><use href="#a-hijab"/></svg><svg class="b" style="left:762.30px;top:242.34px;color:#e58a2e;" width="9.8" height="9.8" viewBox="0 0 16 16" fill="currentColor"><use href="#i-star"/></svg><div class="b" style="left:776px;top:239px;width:131.30px;height:18px;overflow:hidden;"><span class="t" style="left:0;top:3px;font-size:9.5px;line-height:12px;color:#fff;font-weight:700;-webkit-text-stroke:0.25px #fff;transform:translate(0.10px,0.72px) scaleX(0.752);transform-origin:0 50%;">Mark 12 Architects</span></div><span class="t" style="top:242px;font-size:8.4px;line-height:11px;color:#f0f0f0;font-weight:400;-webkit-text-stroke:0.15px #f0f0f0;right:87px;transform:translate(-0.70px,0.43px) scaleX(0.775);transform-origin:100% 50%;background:#1f1f1f;padding-left:0.600px;">348d to expiry</span><span class="t" style="top:256px;font-size:8.4px;line-height:11px;color:#fff;font-weight:400;-webkit-text-stroke:0.2px #fff;left:760px;transform:translate(0.20px,0.13px) scaleX(0.82);transform-origin:0 50%;">80771924</span><svg class="b" style="left:896.65px;top:273.29px;color:#cfd6e2;" width="10.9" height="10.9" viewBox="0 0 16 16" fill="currentColor"><use href="#i-user"/></svg><svg class="b" style="left:873.50px;top:273.64px;color:#cfd6e2;" width="11.2" height="11.2" viewBox="0 0 16 16" fill="currentColor"><use href="#i-comment"/></svg><svg class="b" style="left:850.60px;top:273.54px;color:#cfd6e2;" width="10.6" height="10.6" viewBox="0 0 16 16" fill="currentColor"><use href="#i-doc"/></svg></div>
</div></div></div>
</body></html>
